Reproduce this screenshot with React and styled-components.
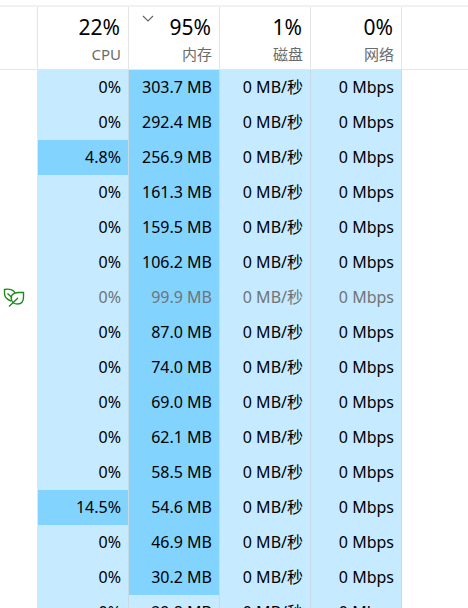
import styled, { createGlobalStyle } from "styled-components";

const columns = [
  { name: "CPU", usage: "22%" },
  { name: "内存", usage: "95%", sorted: true },
  { name: "磁盘", usage: "1%" },
  { name: "网络", usage: "0%" },
];

const processes = [
  { cpu: "0%", memory: "303.7 MB" },
  { cpu: "0%", memory: "292.4 MB" },
  { cpu: "4.8%", memory: "256.9 MB", busy: true },
  { cpu: "0%", memory: "161.3 MB" },
  { cpu: "0%", memory: "159.5 MB" },
  { cpu: "0%", memory: "106.2 MB" },
  { cpu: "0%", memory: "99.9 MB", suspended: true },
  { cpu: "0%", memory: "87.0 MB" },
  { cpu: "0%", memory: "74.0 MB" },
  { cpu: "0%", memory: "69.0 MB" },
  { cpu: "0%", memory: "62.1 MB" },
  { cpu: "0%", memory: "58.5 MB" },
  { cpu: "14.5%", memory: "54.6 MB", busy: true },
  { cpu: "0%", memory: "46.9 MB" },
  { cpu: "0%", memory: "30.2 MB" },
  { cpu: "0%", memory: "29.8 MB", light: true },
];

const LeafIcon = () => (
  <Leaf viewBox="0 1 22 20" role="img" aria-label="效率模式">
    <path d="M8 14C4 12.500 1.500 10 1.500 6.500V2.500C3.500 2 6 2 8 2.600C10 3.200 11.500 4.200 12 5.800" />
    <path d="M10.500 16C7.800 14 7.500 9.500 9.500 7.500C11 6 13 5.500 15.500 5.500H20.500V10C20.500 14.500 18 17 14.500 17C12.500 17 11.500 16.700 10.500 16Z" />
    <path d="M6 19.500L15 11M4.500 6.500L9 10.500" />
  </Leaf>
);

const App = () => {
  return (
    <>
      <GlobalStyle />
      <Panel>
        <ProcessTable>
          <colgroup>
            <StatusCol />
            {columns.map(({ name }) => (
              <UsageCol key={name} />
            ))}
            <col />
          </colgroup>
          <thead>
            <tr>
              <HeaderSpace />
              {columns.map(({ name, usage, sorted }) => (
                <HeaderCell
                  key={name}
                  scope="col"
                  aria-sort={sorted ? "descending" : undefined}
                >
                  <SortButton type="button">
                    {sorted && (
                      <Chevron viewBox="0 0 12 7" aria-hidden="true">
                        <path d="M1 1L6 6L11 1" />
                      </Chevron>
                    )}
                    <Usage>{usage}</Usage>
                    <ColumnName>{name}</ColumnName>
                  </SortButton>
                </HeaderCell>
              ))}
              <HeaderEnd />
            </tr>
          </thead>
          <tbody>
            {processes.map(({ cpu, memory, busy, light, suspended }) => (
              <Row key={memory} $suspended={suspended}>
                <StatusCell>{suspended && <LeafIcon />}</StatusCell>
                <ValueCell $hot={busy}>{cpu}</ValueCell>
                <ValueCell $hot={!light}>{memory}</ValueCell>
                <ValueCell>0 MB/秒</ValueCell>
                <ValueCell>0 Mbps</ValueCell>
                <td />
              </Row>
            ))}
          </tbody>
        </ProcessTable>
      </Panel>
    </>
  );
};

export default App;

const GlobalStyle = createGlobalStyle`
  body {
    margin: 0;
    background: white;
    font-family: "Noto Sans", "Noto Sans CJK SC", sans-serif;
  }
`;
const Panel = styled.main`
  box-sizing: border-box;
  height: 100vh;
  padding-top: 5px;
  overflow: hidden;
`;
const ProcessTable = styled.table`
  width: 100%;
  table-layout: fixed;
  border-collapse: separate;
  border-spacing: 0;
  border-top: 2px solid #f3f1ef;
  td,
  th {
    box-sizing: border-box;
    padding: 0;
  }
`;
const StatusCol = styled.col`
  width: 38px;
`;
const UsageCol = styled.col`
  width: 91px;
`;
const HeaderEnd = styled.td`
  height: 63px;
  border-bottom: 1px solid #e5e5e5;
`;
const HeaderSpace = styled(HeaderEnd)`
  border-right: 1px solid #e5e5e5;
`;
const HeaderCell = styled.th`
  height: 63px;
  border-right: 1px solid #e5e5e5;
  border-bottom: 1px solid #e5e5e5;
  font-weight: 400;
  vertical-align: top;
`;
const SortButton = styled.button`
  position: relative;
  display: flex;
  flex-direction: column;
  align-items: flex-end;
  width: 100%;
  padding: 6px 7px 0 0;
  border: none;
  background: none;
  font-family: inherit;
  cursor: pointer;
`;
const Chevron = styled.svg`
  position: absolute;
  top: 8px;
  left: 13px;
  width: 12px;
  height: 7px;
  fill: none;
  stroke: #666;
  stroke-width: 1.2;
`;
const Usage = styled.span`
  padding-right: 1px;
  font-size: 21px;
  line-height: 28px;
  color: black;
`;
const ColumnName = styled.span`
  font-size: 15px;
  line-height: 26px;
  color: #6b6b6b;
`;
const Row = styled.tr`
  height: 35px;
  color: ${({ $suspended }) => ($suspended ? "#707477" : "black")};
`;
const StatusCell = styled.td`
  border-right: 1px solid #e5e5e5;
  line-height: 0;
`;
const ValueCell = styled.td`
  border-right: 1px solid #c9d9e2;
  background: ${({ $hot }) => ($hot ? "#83d3ff" : "#c6eaff")};
  text-align: right;
  vertical-align: top;
  font-size: 16px;
  line-height: 35px;
  white-space: nowrap;
  && {
    padding-right: 7px;
  }
`;
const Leaf = styled.svg`
  width: 22px;
  height: 20px;
  margin-left: 3px;
  fill: none;
  stroke: #1c8a1c;
  stroke-width: 1.4;
`;
